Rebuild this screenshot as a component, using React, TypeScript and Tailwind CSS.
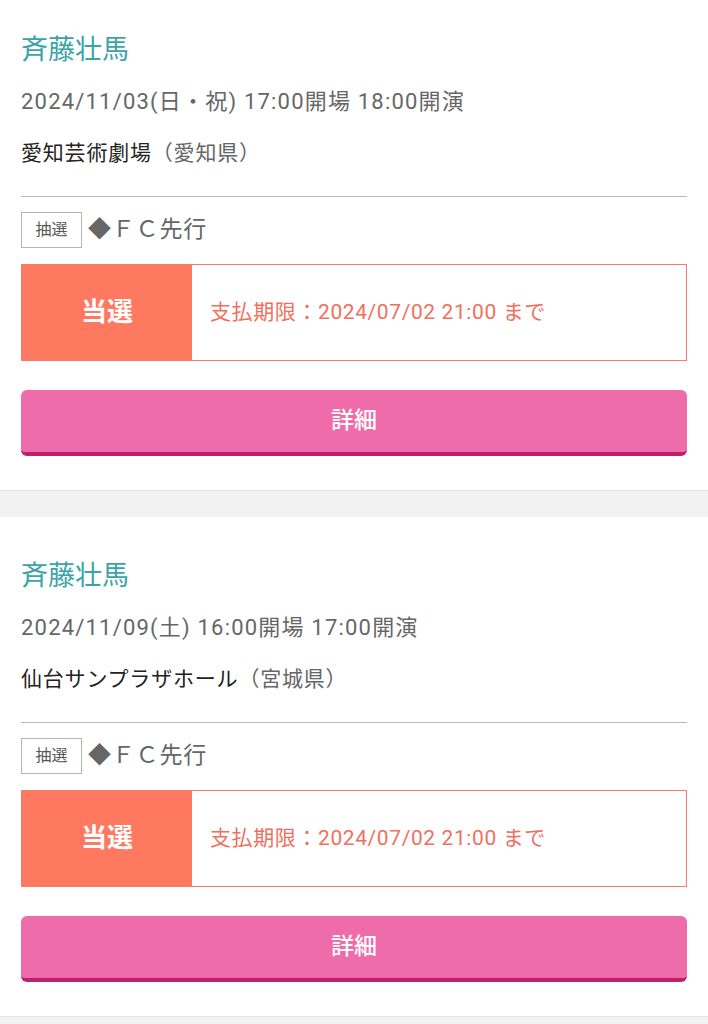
import React from 'react';

interface Ticket {
  artist: string;
  date: string;
  venue: string;
  pref: string;
  deadline: string;
}

const tickets: Ticket[] = [
  {
    artist: '斉藤壮馬',
    date: '2024/11/03(日・祝) 17:00開場 18:00開演',
    venue: '愛知芸術劇場',
    pref: '（愛知県）',
    deadline: '支払期限：2024/07/02 21:00 まで',
  },
  {
    artist: '斉藤壮馬',
    date: '2024/11/09(土) 16:00開場 17:00開演',
    venue: '仙台サンプラザホール',
    pref: '（宮城県）',
    deadline: '支払期限：2024/07/02 21:00 まで',
  },
];

const TicketCard: React.FC<{ t: Ticket; first?: boolean }> = ({ t, first }) => {
  return (
    <div className={`bg-white px-[21px] pb-[34px] ${first ? 'pt-[34px]' : 'pt-[43px]'}`}>
      <h2 className="text-[27px] leading-[32px] text-[#3ba4a8]">{t.artist}</h2>
      <p className="mt-[22px] text-[22px] leading-[28px] tracking-[1.2px] text-[#666]">{t.date}</p>
      <p className="mt-[23px] text-[21px] leading-[28px] tracking-[0.8px] text-[#222]">
        {t.venue}
        <span className="text-[#666]">{t.pref}</span>
      </p>
      <div className="mt-[29px] h-px bg-[#b9b9b9]" />
      <div className="mt-[15px] flex items-center">
        <span className="flex h-[36px] w-[61px] items-center justify-center border border-[#b5b5b5] text-[16px] text-[#555]">
          抽選
        </span>
        <span className="ml-[6px] text-[23px] leading-[30px] tracking-[0.8px] text-[#666]">◆ＦＣ先行</span>
      </div>
      <div className="mt-[16px] flex h-[97px] border border-[#f47d6b]">
        <div className="flex w-[170px] shrink-0 items-center justify-center bg-[#ff7860] text-[26px] font-bold text-white">
          当選
        </div>
        <div className="flex items-center pl-[18px] text-[21px] tracking-[0.6px] text-[#f0705e]">{t.deadline}</div>
      </div>
      <button className="mt-[29px] flex h-[66px] w-full items-center justify-center rounded-md border-b-4 border-[#c01f6c] bg-[#ef6caa] text-[23px] font-medium text-white">
        詳細
      </button>
    </div>
  );
};

export default function App() {
  return (
    <div
      className="min-h-screen bg-[#f2f2f2]"
      style={{ fontFamily: 'Roboto, "Noto Sans CJK JP", sans-serif' }}
    >
      {tickets.map((t, i) => (
        <div key={i}>
          {i > 0 && <div className="h-[27px] border-t border-[#e4e4e4] bg-[#f2f2f2]" />}
          <TicketCard t={t} first={i === 0} />
        </div>
      ))}
      <div className="h-[27px] border-t border-[#e4e4e4] bg-[#f2f2f2]" />
    </div>
  );
}
